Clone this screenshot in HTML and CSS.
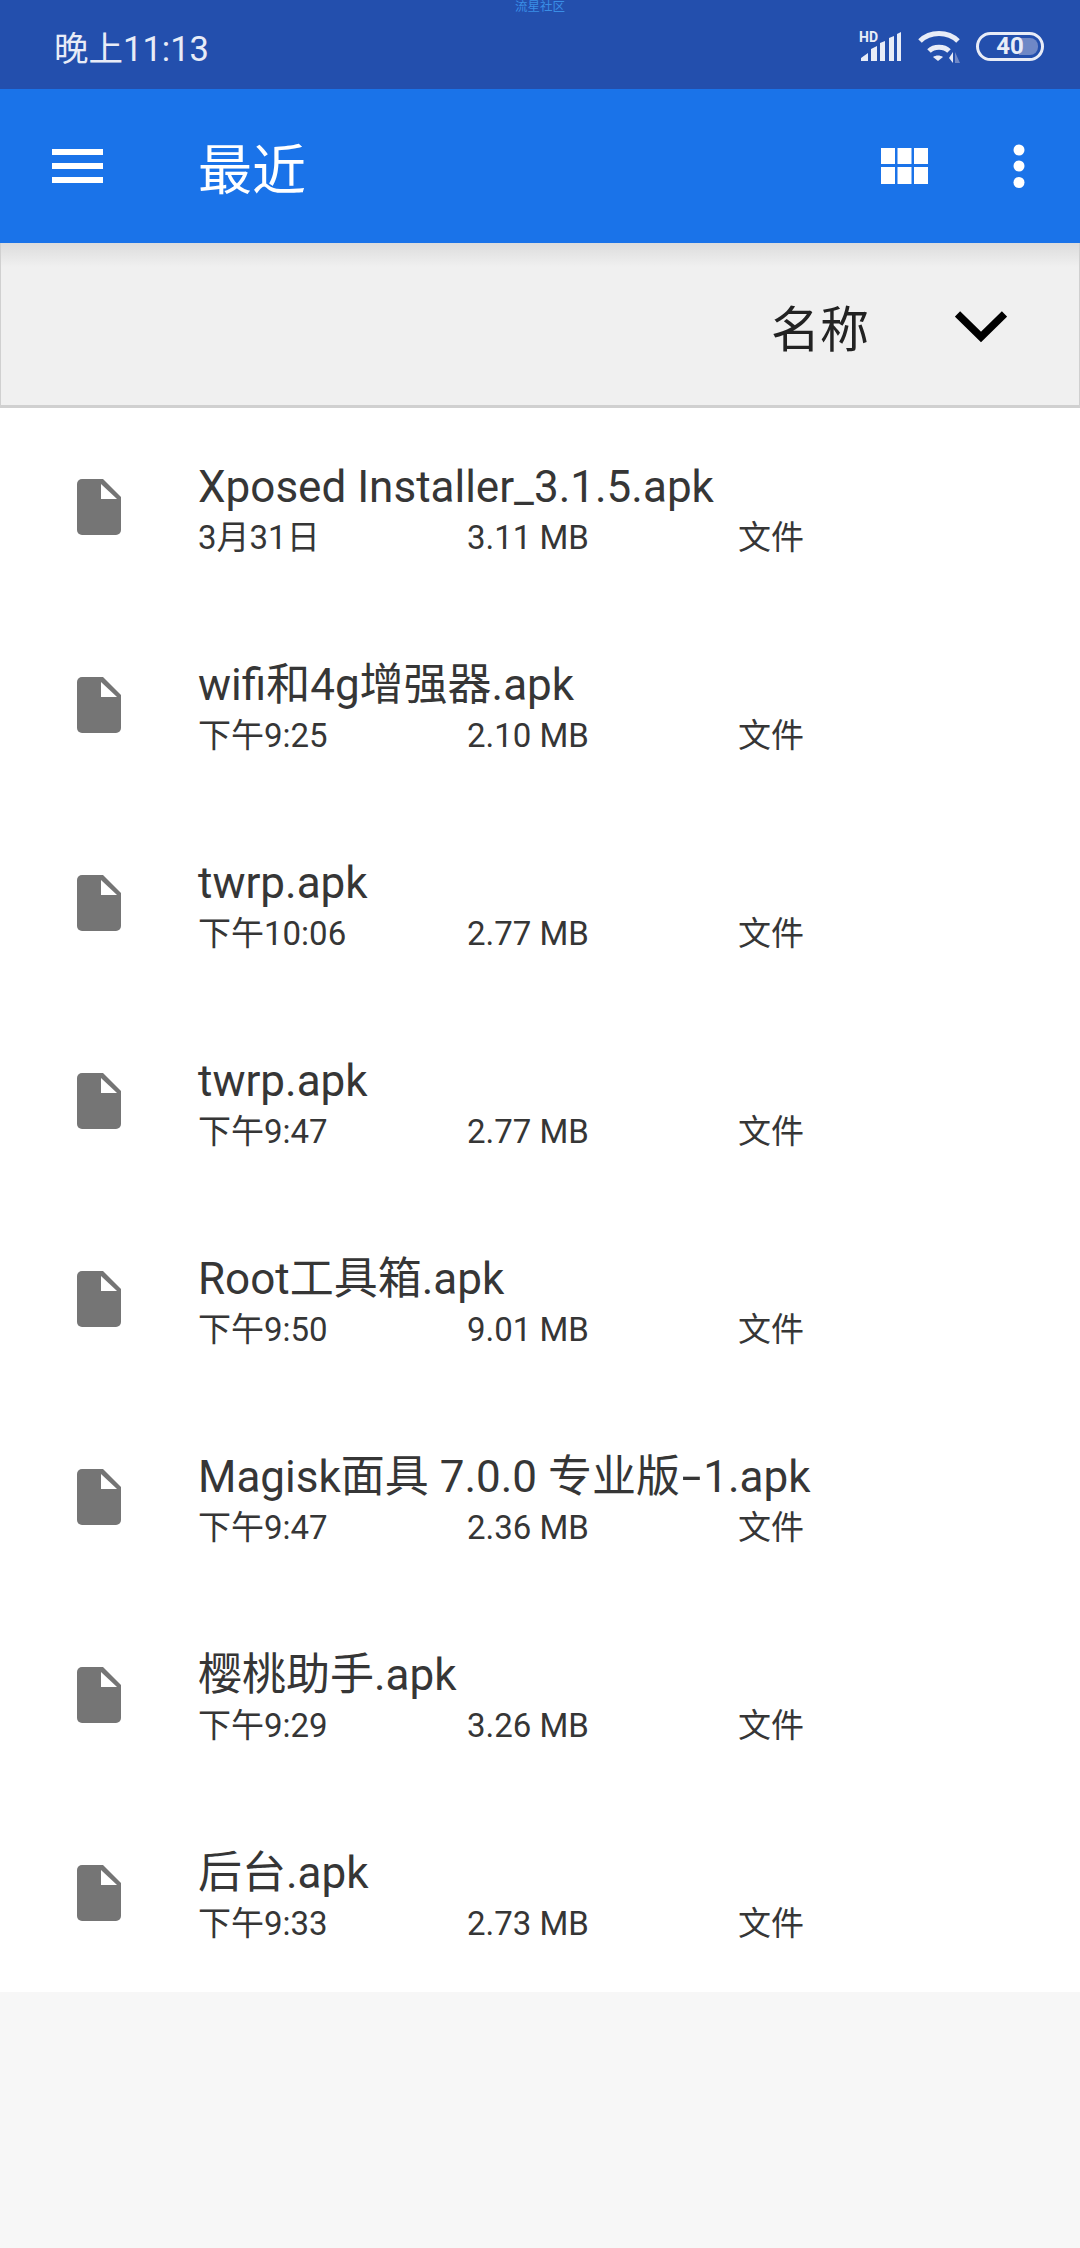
FILE: index.html
```html
<!DOCTYPE html>
<html lang="zh-CN">
<head>
    <meta charset="UTF-8">
    <meta name="viewport" content="width=device-width, initial-scale=1.0">
    <title>最近</title>
    <link rel="stylesheet" href="styles.css">
</head>
<body>
    <div class="status-bar">
        <span class="status-bar__time">晚上11:13</span>
        <span class="status-bar__mark">流星社区</span>
        <div class="status-bar__icons">
            <svg class="icon-signal" width="42" height="30" viewBox="0 0 42 30">
                <text class="icon-signal__hd" x="-1" y="10">HD</text>
                <path fill="#e8ecf7" d="M1 29v-3l7-5v8zM11 29V17l6-3v15zM20 29V11l5-2v20zM29 29V6l5-2v25zM37 29V2l4-2v29z"/>
            </svg>
            <svg class="icon-wifi" width="42" height="33" viewBox="0 0 42 33">
                <path fill="none" stroke="#e8ecf7" stroke-width="5" d="M2 11C12 1 30 1 40 11M11 21c5-5 15-5 20 0"/>
                <path fill="#e8ecf7" d="M15 27c3-2 7-2 10 0l-5 4z"/>
                <path fill="#e8ecf7" d="M35 33v-11l-4 6z"/>
                <path fill="#6f88c6" d="M37 22v11h5z"/>
            </svg>
            <div class="battery">
                <div class="battery__level"></div>
                <span class="battery__text">40</span>
            </div>
        </div>
    </div>

    <header class="app-bar">
        <svg class="app-bar__menu" width="51" height="34" viewBox="0 0 51 34">
            <path fill="#fff" d="M0 0h51v6H0zM0 14h51v6H0zM0 28h51v6H0z"/>
        </svg>
        <h1 class="app-bar__title">最近</h1>
        <svg class="app-bar__grid" width="47" height="36" viewBox="0 0 47 36">
            <path fill="#fff" d="M0 0h14v16H0zM16.500 0h14v16h-14zM33 0h14v16H33zM0 19h14v17H0zM16.500 19h14v17h-14zM33 19h14v17H33z"/>
        </svg>
        <svg class="app-bar__more" width="12" height="44" viewBox="0 0 12 44">
            <circle cx="6" cy="6" r="5.500" fill="#fff"/>
            <circle cx="6" cy="22" r="5.500" fill="#fff"/>
            <circle cx="6" cy="38.500" r="5.500" fill="#fff"/>
        </svg>
    </header>

    <div class="sort-bar">
        <span class="sort-bar__label">名称</span>
        <svg class="sort-bar__arrow" width="52" height="32" viewBox="0 0 52 32">
            <path fill="none" stroke="#000" stroke-width="7.500" d="M2.500 3 26 26 49.500 3"/>
        </svg>
    </div>

    <ul class="file-list">
        <li class="file">
            <svg class="file__icon" width="44" height="56" viewBox="0 0 44 56"><path fill="#757575" d="M5 0h21l18 18v33a5 5 0 0 1-5 5H5a5 5 0 0 1-5-5V5a5 5 0 0 1 5-5z"/><path fill="#fff" d="M24 5v15h16z"/></svg>
            <div class="file__info">
                <div class="file__name">Xposed Installer_3.1.5.apk</div>
                <div class="file__meta"><span class="file__date">3月31日</span><span class="file__size">3.11 MB</span><span class="file__type">文件</span></div>
            </div>
        </li>
        <li class="file">
            <svg class="file__icon" width="44" height="56" viewBox="0 0 44 56"><path fill="#757575" d="M5 0h21l18 18v33a5 5 0 0 1-5 5H5a5 5 0 0 1-5-5V5a5 5 0 0 1 5-5z"/><path fill="#fff" d="M24 5v15h16z"/></svg>
            <div class="file__info">
                <div class="file__name">wifi和4g增强器.apk</div>
                <div class="file__meta"><span class="file__date">下午9:25</span><span class="file__size">2.10 MB</span><span class="file__type">文件</span></div>
            </div>
        </li>
        <li class="file">
            <svg class="file__icon" width="44" height="56" viewBox="0 0 44 56"><path fill="#757575" d="M5 0h21l18 18v33a5 5 0 0 1-5 5H5a5 5 0 0 1-5-5V5a5 5 0 0 1 5-5z"/><path fill="#fff" d="M24 5v15h16z"/></svg>
            <div class="file__info">
                <div class="file__name">twrp.apk</div>
                <div class="file__meta"><span class="file__date">下午10:06</span><span class="file__size">2.77 MB</span><span class="file__type">文件</span></div>
            </div>
        </li>
        <li class="file">
            <svg class="file__icon" width="44" height="56" viewBox="0 0 44 56"><path fill="#757575" d="M5 0h21l18 18v33a5 5 0 0 1-5 5H5a5 5 0 0 1-5-5V5a5 5 0 0 1 5-5z"/><path fill="#fff" d="M24 5v15h16z"/></svg>
            <div class="file__info">
                <div class="file__name">twrp.apk</div>
                <div class="file__meta"><span class="file__date">下午9:47</span><span class="file__size">2.77 MB</span><span class="file__type">文件</span></div>
            </div>
        </li>
        <li class="file">
            <svg class="file__icon" width="44" height="56" viewBox="0 0 44 56"><path fill="#757575" d="M5 0h21l18 18v33a5 5 0 0 1-5 5H5a5 5 0 0 1-5-5V5a5 5 0 0 1 5-5z"/><path fill="#fff" d="M24 5v15h16z"/></svg>
            <div class="file__info">
                <div class="file__name">Root工具箱.apk</div>
                <div class="file__meta"><span class="file__date">下午9:50</span><span class="file__size">9.01 MB</span><span class="file__type">文件</span></div>
            </div>
        </li>
        <li class="file">
            <svg class="file__icon" width="44" height="56" viewBox="0 0 44 56"><path fill="#757575" d="M5 0h21l18 18v33a5 5 0 0 1-5 5H5a5 5 0 0 1-5-5V5a5 5 0 0 1 5-5z"/><path fill="#fff" d="M24 5v15h16z"/></svg>
            <div class="file__info">
                <div class="file__name">Magisk面具 7.0.0 专业版<span class="file__dash">-</span>1.apk</div>
                <div class="file__meta"><span class="file__date">下午9:47</span><span class="file__size">2.36 MB</span><span class="file__type">文件</span></div>
            </div>
        </li>
        <li class="file">
            <svg class="file__icon" width="44" height="56" viewBox="0 0 44 56"><path fill="#757575" d="M5 0h21l18 18v33a5 5 0 0 1-5 5H5a5 5 0 0 1-5-5V5a5 5 0 0 1 5-5z"/><path fill="#fff" d="M24 5v15h16z"/></svg>
            <div class="file__info">
                <div class="file__name">樱桃助手.apk</div>
                <div class="file__meta"><span class="file__date">下午9:29</span><span class="file__size">3.26 MB</span><span class="file__type">文件</span></div>
            </div>
        </li>
        <li class="file">
            <svg class="file__icon" width="44" height="56" viewBox="0 0 44 56"><path fill="#757575" d="M5 0h21l18 18v33a5 5 0 0 1-5 5H5a5 5 0 0 1-5-5V5a5 5 0 0 1 5-5z"/><path fill="#fff" d="M24 5v15h16z"/></svg>
            <div class="file__info">
                <div class="file__name">后台.apk</div>
                <div class="file__meta"><span class="file__date">下午9:33</span><span class="file__size">2.73 MB</span><span class="file__type">文件</span></div>
            </div>
        </li>
    </ul>
</body>
</html>
```

FILE: styles.css
```css
html, body {
    margin: 0;
    padding: 0;
}

body {
    width: 1080px;
    height: 2248px;
    overflow: hidden;
    background-color: #f7f7f7;
    font-family: Roboto, "Noto Sans CJK SC", sans-serif;
}

.status-bar {
    position: relative;
    display: flex;
    align-items: center;
    justify-content: space-between;
    height: 89px;
    padding: 0 36px 0 54px;
    box-sizing: border-box;
    background-color: #234fad;
    color: #e8ecf7;
}

.status-bar__time {
    margin-top: 2px;
    font-size: 34.500px;
}

.status-bar__mark {
    position: absolute;
    top: 0;
    left: 515px;
    font-size: 12.500px;
    line-height: 13px;
    color: #3a8ee6;
}

.status-bar__icons {
    display: flex;
    align-items: center;
    gap: 16px;
    margin-top: 4px;
}

.icon-signal,
.icon-wifi {
    overflow: visible;
}

.icon-signal__hd {
    font-family: Roboto, sans-serif;
    font-size: 14px;
    font-weight: 700;
    fill: #e8ecf7;
}

.battery {
    position: relative;
    width: 68px;
    height: 29px;
    box-sizing: border-box;
    border: 3px solid #e8ecf7;
    border-radius: 15px;
    text-align: center;
}

.battery__level {
    position: absolute;
    top: 3px;
    bottom: 3px;
    right: 3px;
    width: 19px;
    border-radius: 0 8px 8px 0;
    background-color: #6f88c6;
}

.battery__text {
    position: relative;
    display: block;
    font-size: 24px;
    font-weight: 700;
    line-height: 23px;
}

.app-bar {
    position: relative;
    z-index: 1;
    display: flex;
    align-items: center;
    height: 154px;
    background-color: #1a73e9;
    color: #fff;
}

.app-bar__menu {
    margin-left: 52px;
}

.app-bar__title {
    flex: 1;
    margin: 0 0 0 95px;
    font-size: 54px;
    font-weight: 400;
}

.app-bar__grid {
    margin-right: 85px;
}

.app-bar__more {
    margin-right: 55px;
}

.sort-bar {
    display: flex;
    align-items: center;
    justify-content: flex-end;
    height: 165px;
    box-sizing: border-box;
    padding-top: 6px;
    padding-right: 72px;
    background-color: #f0f0f0;
    background-image: linear-gradient(#dcdcdc, #f0f0f0 24px);
    border: 1px solid #d0d0d0;
    border-top: 0;
    border-bottom-width: 3px;
}

.sort-bar__label {
    margin-right: 86px;
    margin-bottom: 4px;
    font-size: 49px;
    color: #222;
}

.file-list {
    list-style: none;
    margin: 0;
    padding: 0;
    background-color: #fff;
}

.file {
    display: flex;
    align-items: center;
    height: 198px;
    padding-left: 77px;
    box-sizing: border-box;
}

.file__info {
    margin-left: 77px;
    padding-top: 7px;
    color: #363636;
}

.file__name {
    font-size: 44px;
    line-height: 48px;
}

/* the dash is wider in the original font */
.file__dash {
    display: inline-block;
    padding: 0 5.500px;
    transform: scaleX(1.6);
}

.file__meta {
    display: flex;
    margin-top: 7px;
    font-size: 33px;
    line-height: 40px;
}

.file__date {
    width: 269px;
}

.file__size {
    width: 271px;
}
```
